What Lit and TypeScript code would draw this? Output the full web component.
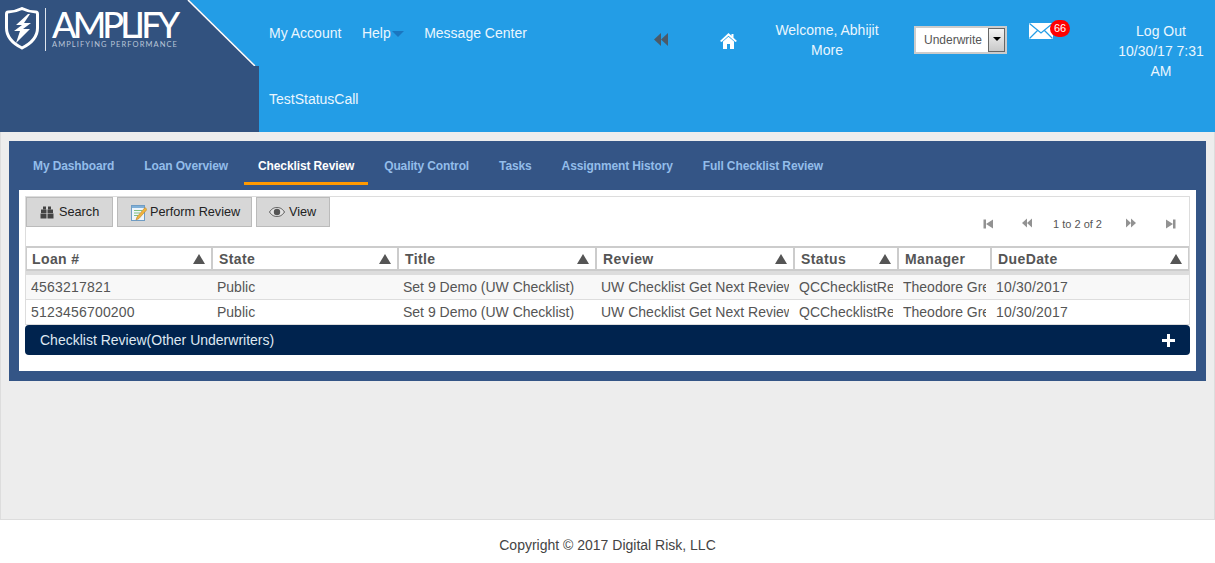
import { LitElement, css, html, svg } from "lit";
import { customElement } from "lit/decorators.js";

interface Column {
    label: string;
    sortable: boolean;
}

const COLUMNS: Column[] = [
    { label: "Loan #", sortable: true },
    { label: "State", sortable: true },
    { label: "Title", sortable: true },
    { label: "Review", sortable: true },
    { label: "Status", sortable: true },
    { label: "Manager", sortable: false },
    { label: "DueDate", sortable: true }
];

const ROWS: string[][] = [
    ["4563217821", "Public", "Set 9 Demo (UW Checklist)", "UW Checklist Get Next Review", "QCChecklistReview", "Theodore Green", "10/30/2017"],
    ["5123456700200", "Public", "Set 9 Demo (UW Checklist)", "UW Checklist Get Next Review", "QCChecklistReview", "Theodore Green", "10/30/2017"]
];

// loan number and due date columns
const NUMERIC_CELLS = [0, 6];

const TABS = ["My Dashboard", "Loan Overview", "Checklist Review", "Quality Control", "Tasks", "Assignment History", "Full Checklist Review"];

const pagerIcon = (points: string[], bar?: number) => html`
    <svg class="pager-icon" width="10" height="10" viewBox="0 0 10 10">
        ${points.map((p) => svg`<polygon points=${p}></polygon>`)}
        ${bar !== undefined ? svg`<rect x=${bar} y="0.5" width="2.5" height="9"></rect>` : ""}
    </svg>
`;

@customElement("app-root")
class AppRoot extends LitElement {
    public static styles = css`
        :host {
            display: flex;
            flex-direction: column;
            height: 563px;
            font-family: "Liberation Sans", Arial, sans-serif;
            font-size: 14px;
            color: #555;
            background: #fff;
        }

        * {
            box-sizing: border-box;
        }

        .header {
            display: flex;
            flex: 0 0 132px;
            background: #239de6;
            color: #eaf6fe;
            line-height: 20px;
        }

        .logo {
            position: relative;
            flex: 0 0 259px;
            display: flex;
            align-items: flex-start;
            padding: 7px 0 0 5px;
            background: #32527f;
        }

        .corner {
            position: absolute;
            top: 0;
            left: 0;
        }

        .logo-rule {
            flex: none;
            width: 1px;
            height: 43px;
            margin: 1px 6px 0 6px;
            background: #dfe5ee;
        }

        .brand {
            display: flex;
            flex-direction: column;
            color: #fff;
        }

        .brand-name {
            font-family: Lato, sans-serif;
            font-size: 36px;
            font-weight: 500;
            line-height: 28px;
            margin-top: 3px;
            letter-spacing: -3.9px;
            white-space: nowrap;
        }

        .brand-tag {
            margin-top: 3px;
            font-family: Lato, sans-serif;
            font-size: 7.5px;
            line-height: 8px;
            letter-spacing: 1.08px;
            color: #b9c5d8;
            white-space: nowrap;
        }

        .nav {
            flex: 0 0 381px;
            display: grid;
            grid-template-rows: 66px 66px;
            padding-left: 10px;
        }

        .nav-row {
            display: flex;
            gap: 20.5px;
            padding-top: 23px;
        }

        .help {
            display: flex;
        }

        .caret {
            width: 0;
            height: 0;
            margin: 8px 0 0 1px;
            border-left: 6.5px solid transparent;
            border-right: 6.5px solid transparent;
            border-top: 6px solid #1a76c0;
        }

        .back {
            flex: 0 0 42px;
            display: flex;
            justify-content: center;
            padding-top: 33px;
        }

        .home {
            flex: 0 0 92px;
            display: flex;
            justify-content: center;
            padding-top: 33px;
        }

        .welcome {
            flex: 0 0 106px;
            padding-top: 20px;
            text-align: center;
            white-space: nowrap;
        }

        .role {
            flex: 0 0 93px;
            display: flex;
            align-items: center;
            justify-content: space-between;
            height: 28px;
            margin: 26px 0 0 34px;
            padding: 0 0 0 8px;
            border: 2px solid #ccc;
            background: #fff;
            color: #555;
            font-size: 12px;
        }

        .role-button {
            display: flex;
            justify-content: center;
            width: 17px;
            height: 24px;
            padding-top: 8px;
            border: 1px solid #666;
            background: linear-gradient(#f4f4f4, #c9c9c9);
        }

        .role-button i {
            width: 0;
            height: 0;
            border-left: 4px solid transparent;
            border-right: 4px solid transparent;
            border-top: 4px solid #000;
        }

        .mail {
            position: relative;
            flex: 0 0 83px;
            margin-left: 22px;
            padding-top: 23px;
        }

        .badge {
            position: absolute;
            top: 20px;
            left: 21px;
            width: 20px;
            height: 17px;
            border-radius: 10px;
            background: #f00;
            color: #fff;
            font-size: 11px;
            line-height: 17px;
            text-align: center;
        }

        .logout {
            flex: 0 0 98px;
            padding-top: 21px;
            text-align: center;
        }

        .main {
            flex: 1;
            padding: 9px 8px 0 8px;
            border: 1px solid #ddd;
            border-top: 0;
            background: #ededed;
        }

        .panel {
            height: 240px;
            padding: 0 10px 10px 10px;
            background: #345586;
        }

        .tabs {
            display: flex;
            gap: 2px;
            height: 49px;
        }

        .tab {
            height: 44px;
            padding: 0 14px;
            color: #93bdea;
            font-size: 12px;
            font-weight: bold;
            letter-spacing: -0.12px;
            line-height: 50px;
            white-space: nowrap;
        }

        .tab.active {
            color: #fff;
            border-bottom: 3px solid #f90;
        }

        .sheet {
            height: 181px;
            padding: 6px;
            background: #fff;
        }

        .grid-box {
            height: 129px;
            border: 1px solid #ddd;
            border-bottom: 0;
        }

        .toolbar {
            display: flex;
            justify-content: space-between;
            height: 49px;
        }

        .buttons {
            display: flex;
            gap: 4px;
        }

        .btn {
            display: flex;
            align-items: center;
            height: 30px;
            border: 1px solid #bbb;
            background: #d7d7d7;
            color: #222;
            font-size: 12.7px;
            white-space: nowrap;
        }

        .btn span {
            padding-bottom: 1px;
        }

        .btn.search {
            width: 87px;
            padding-left: 13px;
            gap: 5px;
        }

        .btn.perform {
            width: 135px;
            padding-left: 13px;
            gap: 3px;
        }

        .btn.view {
            width: 74px;
            padding-left: 12px;
            gap: 4px;
        }

        .pager {
            display: flex;
            align-items: center;
            height: 20px;
            margin-top: 17px;
            padding-right: 13px;
            font-size: 11px;
            color: #555;
        }

        .pager-icon {
            fill: #929292;
        }

        .pager .prev {
            margin: 0 21px 0 29px;
        }

        .pager .next {
            margin: 0 30px 0 24px;
        }

        .row {
            display: grid;
            grid-template-columns: 186px 186px 198px 198px 104px 93px 198px;
        }

        .head {
            height: 29px;
            border-bottom: 4px solid #ddd;
        }

        .head-cell {
            display: flex;
            align-items: center;
            justify-content: space-between;
            padding: 0 6px;
            border: 2px solid #ccc;
            border-left-width: 1px;
            border-right-width: 1px;
            color: #555;
            font-weight: bold;
            letter-spacing: 0.4px;
        }

        .head-cell:first-child {
            padding-left: 5px;
        }

        .body-row {
            height: 25px;
            border-bottom: 1px solid #ddd;
            line-height: 24px;
        }

        .body-row.odd {
            background: #f8f8f8;
        }

        .cell {
            margin: 0 5px;
            overflow: hidden;
            white-space: nowrap;
        }

        .cell.numeric {
            letter-spacing: 0.2px;
        }

        .collapse-bar {
            display: flex;
            align-items: center;
            justify-content: space-between;
            height: 30px;
            padding: 0 15px;
            border-radius: 4px;
            background: #00234e;
            color: #dfe8f2;
        }

        .footer {
            flex: 0 0 43px;
            min-height: 0;
            padding-top: 15px;
            color: #444;
            line-height: 20px;
            text-align: center;
        }
    `;

    private renderLogo() {
        return html`
            <svg class="corner" width="259" height="66" viewBox="0 0 259 66">
                <polygon points="189,0 259,0 259,66 256,66" fill="#239de6"></polygon>
                <line x1="188" y1="0" x2="255" y2="66" stroke="#fff" stroke-width="1.6"></line>
            </svg>
            <svg width="34" height="43" viewBox="0 0 34 43">
                <path
                    d="M17 1.5 C12 4 7 5 3 5 Q1.5 5 1.5 7 L1.5 21 C1.5 31 9 37 17 41 C25 37 32.5 31 32.5 21 L32.5 7 Q32.5 5 31 5 C27 5 22 4 17 1.5 Z"
                    fill="none"
                    stroke="#fff"
                    stroke-width="3"
                ></path>
                <path
                    d="M23 7 L11 18 L17 18 L9 24 L15 24 L11 36 L25 22 L18 22 L26 16 L19 16 L25 7 Z"
                    fill="#fff"
                ></path>
            </svg>
            <span class="logo-rule"></span>
            <span class="brand">
                <span class="brand-name">AMPLIFY</span>
                <span class="brand-tag">AMPLIFYING PERFORMANCE</span>
            </span>
        `;
    }

    private renderHeader() {
        return html`
            <header class="header">
                <div class="logo">${this.renderLogo()}</div>
                <nav class="nav">
                    <div class="nav-row">
                        <span>My Account</span>
                        <span class="help">Help<i class="caret"></i></span>
                        <span>Message Center</span>
                    </div>
                    <div class="nav-row">
                        <span>TestStatusCall</span>
                    </div>
                </nav>
                <div class="back">
                    <svg width="14" height="13" viewBox="0 0 14 13" fill="#4b5a68">
                        <polygon points="7,0 7,13 0,6.5"></polygon>
                        <polygon points="14,0 14,13 7,6.5"></polygon>
                    </svg>
                </div>
                <div class="home">
                    <svg width="17" height="16" viewBox="0 0 17 16" fill="#fff">
                        <path d="M8.5 0 L11.5 2.8 L11.5 1 L13.5 1 L13.5 4.7 L17 8 L15.4 9 L8.5 2.8 L1.6 9 L0 8 Z"></path>
                        <path d="M3 8.6 L8.5 3.8 L14 8.6 L14 16 L10 16 L10 11 L7 11 L7 16 L3 16 Z"></path>
                    </svg>
                </div>
                <div class="welcome">Welcome, Abhijit<br />More</div>
                <div class="role">
                    <span>Underwrite</span>
                    <span class="role-button"><i></i></span>
                </div>
                <div class="mail">
                    <svg width="24" height="16" viewBox="0 0 24 16">
                        <rect width="24" height="16" fill="#fff"></rect>
                        <path d="M0.5 0.5 L12 10 L23.5 0.5 M0.5 15.5 L8.5 7.5 M23.5 15.5 L15.5 7.5" fill="none" stroke="#239de6" stroke-width="1.2"></path>
                    </svg>
                    <span class="badge">66</span>
                </div>
                <div class="logout">Log Out<br />10/30/17 7:31 AM</div>
            </header>
        `;
    }

    private renderToolbar() {
        return html`
            <div class="toolbar">
                <div class="buttons">
                    <div class="btn search">
                        <svg width="14" height="13" viewBox="0 0 14 13" fill="#444">
                            <rect x="3" y="0.5" width="3" height="3"></rect>
                            <rect x="8" y="0.5" width="3" height="3"></rect>
                            <rect x="1" y="3.5" width="5.5" height="3.5"></rect>
                            <rect x="7.5" y="3.5" width="5.5" height="3.5"></rect>
                            <rect x="0.5" y="7.5" width="6" height="5"></rect>
                            <rect x="7.5" y="7.5" width="6" height="5"></rect>
                        </svg>
                        <span>Search</span>
                    </div>
                    <div class="btn perform">
                        <svg width="16" height="17" viewBox="0 0 16 17">
                            <rect x="0.5" y="1.5" width="13" height="15" fill="#eef5fb" stroke="#6f9cc4"></rect>
                            <rect x="1" y="2" width="12" height="2" fill="#7fb0d8"></rect>
                            <path d="M3 6.5 H11 M3 9 H9 M3 11.5 H7" stroke="#7fbf7f" stroke-width="1"></path>
                            <path d="M14 3.5 L16 5.5 L8 14.5 L5 16 L6 13 Z" fill="#f0b43c" stroke="#b9802a" stroke-width="0.6"></path>
                        </svg>
                        <span>Perform Review</span>
                    </div>
                    <div class="btn view">
                        <svg width="16" height="10" viewBox="0 0 16 10">
                            <path d="M0.5 5 C3 1 6 0.5 8 0.5 C10 0.5 13 1 15.5 5 C13 9 10 9.5 8 9.5 C6 9.5 3 9 0.5 5 Z" fill="#e4e4e4" stroke="#555"></path>
                            <circle cx="8" cy="5" r="3.2" fill="#555"></circle>
                        </svg>
                        <span>View</span>
                    </div>
                </div>
                <div class="pager">
                    ${pagerIcon(["10,0.5 10,9.5 3,5"], 0.5)}
                    <span class="prev">${pagerIcon(["5,0.5 5,9.5 0,5", "10,0.5 10,9.5 5,5"])}</span>
                    <span>1 to 2 of 2</span>
                    <span class="next">${pagerIcon(["0,0.5 0,9.5 5,5", "5,0.5 5,9.5 10,5"])}</span>
                    ${pagerIcon(["0,0.5 0,9.5 7,5"], 7)}
                </div>
            </div>
        `;
    }

    private renderGrid() {
        return html`
            <div class="row head">
                ${COLUMNS.map(
                    (c) => html`
                        <div class="head-cell">
                            <span>${c.label}</span>
                            ${c.sortable
                                ? html`<svg width="12" height="10" viewBox="0 0 12 10" fill="#555"><polygon points="6,0 12,10 0,10"></polygon></svg>`
                                : ""}
                        </div>
                    `
                )}
            </div>
            ${ROWS.map(
                (r, i) => html`
                    <div class="row body-row ${i % 2 === 0 ? "odd" : ""}">
                        ${r.map((v, n) => html`<div class="cell ${NUMERIC_CELLS.includes(n) ? "numeric" : ""}">${v}</div>`)}
                    </div>
                `
            )}
        `;
    }

    protected render() {
        return html`
            ${this.renderHeader()}
            <main class="main">
                <section class="panel">
                    <div class="tabs">
                        ${TABS.map((t) => html`<div class="tab ${t === "Checklist Review" ? "active" : ""}">${t}</div>`)}
                    </div>
                    <div class="sheet">
                        <div class="grid-box">${this.renderToolbar()}${this.renderGrid()}</div>
                        <div class="collapse-bar">
                            <span>Checklist Review(Other Underwriters)</span>
                            <svg width="13" height="13" viewBox="0 0 13 13" fill="#fff">
                                <path d="M5 0 H8 V5 H13 V8 H8 V13 H5 V8 H0 V5 H5 Z"></path>
                            </svg>
                        </div>
                    </div>
                </section>
            </main>
            <footer class="footer">Copyright © 2017 Digital Risk, LLC</footer>
        `;
    }
}

export { AppRoot };
